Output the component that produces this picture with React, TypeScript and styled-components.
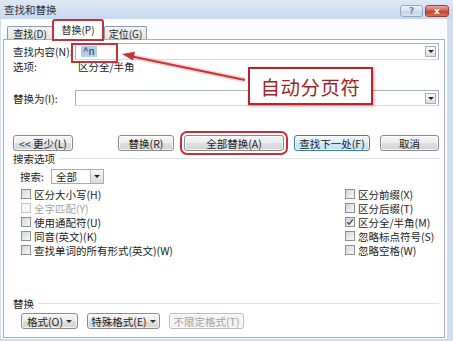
import styled, { createGlobalStyle } from 'styled-components';

const GlobalStyle = createGlobalStyle`
  html, body {
    margin: 0;
    padding: 0;
    background: #ffffff;
  }
  body {
    width: 453px;
    height: 341px;
    overflow: hidden;
  }
`;

const Window = styled.div`
  position: relative;
  width: 453px;
  height: 341px;
  box-sizing: border-box;
  display: flex;
  flex-direction: column;
  padding: 0 6px 2px 1px;
  background: #d2deec;
  font-family: "Noto Sans CJK SC", "Noto Sans", sans-serif;
  font-size: 10.5px;
  color: #222222;
`;

const TitleBar = styled.div`
  flex: none;
  height: 19px;
  margin: 0 -6px 0 -1px;
  padding: 0 4px;
  display: flex;
  align-items: flex-start;
  justify-content: space-between;
  background: linear-gradient(#dde8f5, #c8d8ec);
`;

const Title = styled.span`
  line-height: 19px;
  color: #2a3442;
`;

const CaptionButtons = styled.div`
  display: flex;
  gap: 2px;
  margin-top: 5px;
`;

const CaptionButton = styled.div<{ $close?: boolean }>`
  width: ${p => (p.$close ? 24 : 23)}px;
  height: 12px;
  box-sizing: border-box;
  display: flex;
  align-items: center;
  justify-content: center;
  border: 1px solid ${p => (p.$close ? '#9a4038' : '#8fa5c3')};
  border-radius: 3px;
  background: ${p =>
    p.$close
      ? 'linear-gradient(#eaa89b, #d2574a 50%, #c3402f 51%, #d7705c)'
      : 'linear-gradient(#eef3fa, #d6e2f1 50%, #c5d6ec 51%, #d5e3f3)'};
  color: ${p => (p.$close ? '#ffffff' : '#6f86a6')};
  font-family: "DejaVu Sans", sans-serif;
  font-size: 9px;
  font-weight: bold;
  line-height: 1;
`;

const Client = styled.div`
  flex: 1;
  min-height: 0;
  display: flex;
  flex-direction: column;
  padding: 0 2px 1px 2px;
  background: #fafcfe;
`;

const TabStrip = styled.div`
  flex: none;
  height: 20px;
  display: flex;
  align-items: flex-end;
  padding-left: 4px;
`;

const Tab = styled.div<{ $w: number; $active?: boolean; $gap?: number }>`
  position: relative;
  z-index: ${p => (p.$active ? 2 : 1)};
  width: ${p => p.$w}px;
  height: ${p => (p.$active ? 20 : 13)}px;
  margin-left: ${p => p.$gap ?? 0}px;
  margin-bottom: ${p => (p.$active ? -1 : 0)}px;
  box-sizing: border-box;
  display: flex;
  align-items: center;
  justify-content: center;
  padding-bottom: ${p => (p.$active ? 2 : 0)}px;
  border: 1px solid #8d9aab;
  border-bottom: none;
  border-radius: 2px 2px 0 0;
  background: ${p => (p.$active ? '#ffffff' : 'linear-gradient(#f4f4f4, #e3e3e3)')};
  outline: ${p => (p.$active ? '2px solid #c4313a' : 'none')};
  outline-offset: -1px;
  font-size: 10px;
  white-space: nowrap;
`;

const Panel = styled.div`
  flex: 1;
  display: flex;
  flex-direction: column;
  border: 1px solid #a6b0bc;
  background: #ffffff;
  padding: 3px 5px 0 9px;
`;

const FieldRow = styled.div<{ $h: number; $top?: number }>`
  display: flex;
  align-items: center;
  height: ${p => p.$h}px;
  margin-top: ${p => p.$top ?? 0}px;
`;

const FieldLabel = styled.span<{ $w: number }>`
  flex: none;
  width: ${p => p.$w}px;
  white-space: nowrap;
`;

const ComboInput = styled.div`
  flex: 1;
  height: 100%;
  box-sizing: border-box;
  display: flex;
  align-items: center;
  padding: 0 2px 0 4px;
  border: 1px solid #abb0b8;
  border-bottom-color: #d4d8de;
  background: #ffffff;
`;

const Selection = styled.span`
  margin-left: 1px;
  padding: 0 2px;
  height: 11px;
  line-height: 10px;
  font-size: 10px;
  background: #b4cde9;
  color: #1a2f5a;
`;

const DropButton = styled.span`
  margin-left: auto;
  width: 11px;
  height: 11px;
  box-sizing: border-box;
  display: flex;
  align-items: center;
  justify-content: center;
  border: 1px solid #a8afb9;
  background: linear-gradient(#fafafa, #dcdcdc);
`;

const Triangle = styled.span<{ $color?: string }>`
  width: 0;
  height: 0;
  border-left: 3px solid transparent;
  border-right: 3px solid transparent;
  border-top: 3px solid ${p => p.$color ?? '#222222'};
`;

const ButtonRow = styled.div<{ $top: number; $indent?: number; $gap: number }>`
  display: flex;
  align-items: center;
  gap: ${p => p.$gap}px;
  height: 16px;
  margin-top: ${p => p.$top}px;
  padding-left: ${p => p.$indent ?? 0}px;
`;

const Spacer = styled.span`
  flex: 1;
`;

const Button = styled.button<{ $w: number; $default?: boolean; $marked?: boolean }>`
  flex: none;
  width: ${p => p.$w}px;
  height: 16px;
  box-sizing: border-box;
  padding: 0;
  display: flex;
  align-items: center;
  justify-content: center;
  gap: 3px;
  font: inherit;
  color: ${p => (p.disabled ? '#a2a2a2' : '#222222')};
  white-space: nowrap;
  border: 1px solid ${p => (p.disabled ? '#b8bcc0' : p.$default ? '#3d7bab' : '#8a8a8a')};
  border-radius: 3px;
  background: ${p =>
    p.disabled
      ? '#f4f4f4'
      : p.$default
      ? 'linear-gradient(#eef7fc, #e0f0fa 48%, #cde8f8 52%, #bfe1f5)'
      : 'linear-gradient(#f6f6f6, #ececec 48%, #dfdfdf 52%, #d3d3d3)'};
  box-shadow: inset 0 0 0 1px rgba(255, 255, 255, 0.75);
  outline: ${p => (p.$marked ? '2px solid #c4313a' : 'none')};
  outline-offset: 2px;
`;

const SectionHeader = styled.div<{ $top: number }>`
  display: flex;
  align-items: center;
  gap: 4px;
  height: 12px;
  margin-top: ${p => p.$top}px;
`;

const Rule = styled.span`
  flex: 1;
  height: 1px;
  background: #dde3e8;
`;

const SearchRow = styled.div`
  display: flex;
  align-items: center;
  height: 15px;
  margin-top: 5px;
  padding-left: 7px;
`;

const Select = styled.div`
  width: 53px;
  height: 15px;
  box-sizing: border-box;
  display: flex;
  align-items: center;
  padding-left: 4px;
  border: 1px solid #a5acb5;
  background: #ffffff;
`;

const SelectButton = styled.span`
  margin-left: auto;
  width: 13px;
  height: 100%;
  box-sizing: border-box;
  display: flex;
  align-items: center;
  justify-content: center;
  border-left: 1px solid #b6bcc6;
  background: linear-gradient(#f8f8f8, #dadada);
`;

const CheckGrid = styled.div`
  display: grid;
  grid-template-columns: 1fr 94px;
  grid-template-rows: repeat(5, 14px);
  grid-auto-flow: column;
  margin-top: 3px;
  padding-left: 8px;
`;

const CheckItem = styled.label<{ $disabled?: boolean }>`
  display: flex;
  align-items: center;
  gap: 3px;
  white-space: nowrap;
  color: ${p => (p.$disabled ? '#a6a6a6' : '#222222')};
`;

const Box = styled.span<{ $disabled?: boolean }>`
  flex: none;
  width: 10px;
  height: 10px;
  box-sizing: border-box;
  display: flex;
  align-items: center;
  justify-content: center;
  border: 1px solid ${p => (p.$disabled ? '#c6c6c6' : '#8e8f8f')};
  background: ${p => (p.$disabled ? '#f5f5f5' : 'linear-gradient(135deg, #d3d6da, #f8f8f8)')};
`;

const Mark = styled.div`
  position: absolute;
  left: 71px;
  top: 43px;
  width: 47px;
  height: 20px;
  box-sizing: border-box;
  border: 2px solid #c4313a;
  pointer-events: none;
`;

const Callout = styled.div`
  position: absolute;
  left: 248px;
  top: 67px;
  width: 125px;
  height: 38px;
  box-sizing: border-box;
  display: flex;
  align-items: center;
  justify-content: center;
  border: 2px solid #b3262e;
  background: #ffffff;
  box-shadow: 1px 1px 3px rgba(160, 30, 40, 0.45);
  font-size: 19.5px;
  font-weight: 400;
  letter-spacing: 0.5px;
  color: #a31f27;
`;

const ArrowLayer = styled.svg`
  position: absolute;
  left: 0;
  top: 0;
  width: 453px;
  height: 341px;
  pointer-events: none;
`;

const leftChecks = [
  { label: '区分大小写(H)' },
  { label: '全字匹配(Y)', disabled: true },
  { label: '使用通配符(U)' },
  { label: '同音(英文)(K)' },
  { label: '查找单词的所有形式(英文)(W)' },
];

const rightChecks = [
  { label: '区分前缀(X)' },
  { label: '区分后缀(T)' },
  { label: '区分全/半角(M)', checked: true },
  { label: '忽略标点符号(S)' },
  { label: '忽略空格(W)' },
];

const Check = ({ label, checked, disabled }: { label: string; checked?: boolean; disabled?: boolean }) => (
  <CheckItem $disabled={disabled}>
    <Box $disabled={disabled}>
      {checked && (
        <svg width="8" height="8" viewBox="0 0 8 8">
          <path d="M1.2 4.2 L3.1 6.2 L6.8 1.4" fill="none" stroke="#3a4f6e" strokeWidth="1.4" />
        </svg>
      )}
    </Box>
    {label}
  </CheckItem>
);

export default function App() {
  return (
    <>
      <GlobalStyle />
      <Window>
        <TitleBar>
          <Title>查找和替换</Title>
          <CaptionButtons>
            <CaptionButton>?</CaptionButton>
            <CaptionButton $close>x</CaptionButton>
          </CaptionButtons>
        </TitleBar>
        <Client>
          <TabStrip>
            <Tab $w={46}>查找(D)</Tab>
            <Tab $w={50} $active>替换(P)</Tab>
            <Tab $w={43} $gap={1}>定位(G)</Tab>
          </TabStrip>
          <Panel>
            <FieldRow $h={17}>
              <FieldLabel $w={62}>查找内容(N):</FieldLabel>
              <ComboInput>
                <Selection>^n</Selection>
                <DropButton><Triangle /></DropButton>
              </ComboInput>
            </FieldRow>
            <FieldRow $h={12}>
              <FieldLabel $w={65}>选项:</FieldLabel>
              <span>区分全/半角</span>
            </FieldRow>
            <FieldRow $h={16} $top={18}>
              <FieldLabel $w={62}>替换为(I):</FieldLabel>
              <ComboInput>
                <DropButton><Triangle /></DropButton>
              </ComboInput>
            </FieldRow>

            <ButtonRow $top={29} $gap={10}>
              <Button $w={60}>&lt;&lt; 更少(L)</Button>
              <Spacer />
              <Button $w={56}>替换(R)</Button>
              <Button $w={100} $marked>全部替换(A)</Button>
              <Button $w={76} $default>查找下一处(F)</Button>
              <Button $w={59}>取消</Button>
            </ButtonRow>

            <SectionHeader $top={1}>
              <span>搜索选项</span>
              <Rule />
            </SectionHeader>
            <SearchRow>
              <FieldLabel $w={31}>搜索:</FieldLabel>
              <Select>
                全部
                <SelectButton><Triangle /></SelectButton>
              </Select>
            </SearchRow>
            <CheckGrid>
              {leftChecks.map(c => <Check key={c.label} {...c} />)}
              {rightChecks.map(c => <Check key={c.label} {...c} />)}
            </CheckGrid>

            <SectionHeader $top={40}>
              <span>替换</span>
              <Rule />
            </SectionHeader>
            <ButtonRow $top={4} $indent={8} $gap={9}>
              <Button $w={57}>格式(O)<Triangle $color="#333" /></Button>
              <Button $w={73}>特殊格式(E)<Triangle $color="#333" /></Button>
              <Button $w={75} disabled>不限定格式(T)</Button>
            </ButtonRow>
          </Panel>
        </Client>

        <Mark />
        <ArrowLayer viewBox="0 0 453 341">
          <line x1="245" y1="80" x2="132" y2="56.5" stroke="#f0b4b8" strokeWidth="5" strokeOpacity="0.6" />
          <line x1="245" y1="80" x2="132" y2="56.5" stroke="#c5333b" strokeWidth="2" />
          <polygon points="122,54 135,51.8 133,60.5" fill="#c5333b" />
        </ArrowLayer>
        <Callout>自动分页符</Callout>
      </Window>
    </>
  );
}
